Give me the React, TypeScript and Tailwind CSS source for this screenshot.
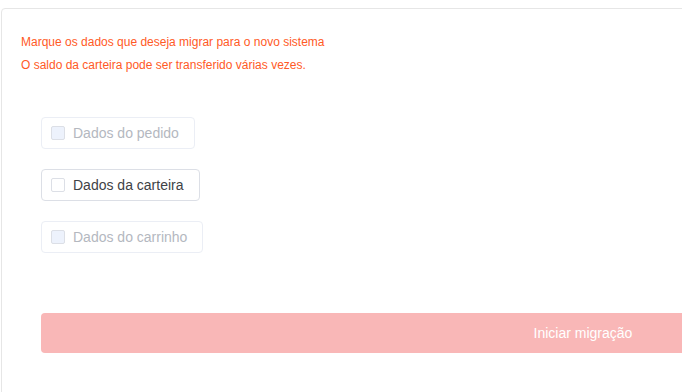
import React, { useState } from 'react'

type Opcao = { id: string; label: string; disabled: boolean }

const opcoes: Opcao[] = [
  { id: 'pedido', label: 'Dados do pedido', disabled: true },
  { id: 'carteira', label: 'Dados da carteira', disabled: false },
  { id: 'carrinho', label: 'Dados do carrinho', disabled: true },
]

export default function App() {
  const [marcados, setMarcados] = useState<string[]>([])

  const toggle = (id: string) => {
    setMarcados(m => (m.includes(id) ? m.filter(x => x !== id) : [...m, id]))
  }

  return (
    <div className="w-[682px] h-[392px] overflow-hidden bg-white" style={{ fontFamily: '"Liberation Sans", Arial, sans-serif' }}>
      <div className="mt-[8px] ml-[1px] w-[1144px] h-[400px] border border-[#e6e6e6] rounded-[4px] pt-[22px] px-[19px]">
        <p className="text-[12px] leading-[23px] text-[#ff5a26]">Marque os dados que deseja migrar para o novo sistema</p>
        <p className="text-[12px] leading-[23px] text-[#ff5a26]">O saldo da carteira pode ser transferido várias vezes.</p>

        <div className="mt-[40px] pl-[20px] flex flex-col items-start gap-[20px]">
          {opcoes.map(o => {
            const checked = marcados.includes(o.id)
            return (
              <label
                key={o.id}
                onClick={() => !o.disabled && toggle(o.id)}
                className={`h-[32px] flex items-center pl-[9px] pr-[15px] rounded-[4px] border ${
                  o.disabled ? 'border-[#ebeef5] cursor-not-allowed' : 'border-[#dcdfe6] cursor-pointer'
                }`}
              >
                <span
                  className={`w-[14px] h-[14px] rounded-[2px] border ${
                    o.disabled ? 'bg-[#edf2fc] border-[#dcdfe6]' : checked ? 'bg-[#409eff] border-[#409eff]' : 'bg-white border-[#dcdfe6]'
                  }`}
                />
                <span className={`ml-[8px] text-[14px] ${o.disabled ? 'text-[#b4b8bf]' : 'text-[#404246]'}`}>{o.label}</span>
              </label>
            )
          })}
        </div>

        <button
          disabled
          className="mt-[60px] ml-[20px] w-[1084px] h-[40px] rounded-[4px] bg-[#f9b7b7] text-white text-[14px] cursor-not-allowed"
        >
          Iniciar migração
        </button>
      </div>
    </div>
  )
}
